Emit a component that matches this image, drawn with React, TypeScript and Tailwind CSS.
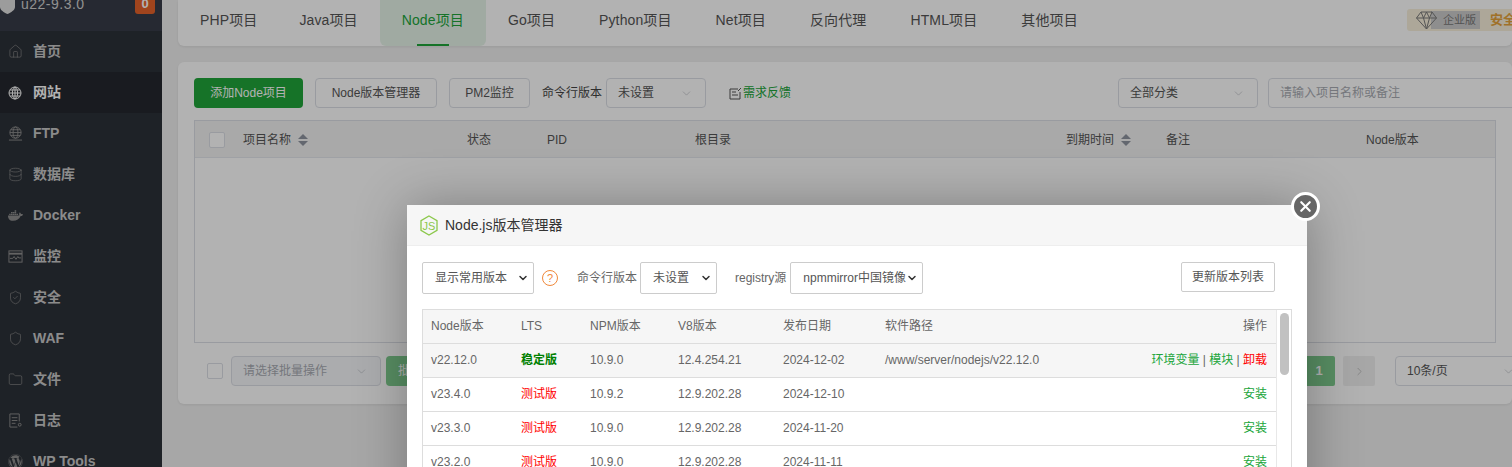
import React from "react";
import { Home, Database, Folder, ShieldCheck, Shield, ChevronDown, ChevronRight, X } from "lucide-react";
import { FaDocker, FaWordpress } from "react-icons/fa";

const FONT = "font-['Liberation_Sans','Noto_Sans_CJK_SC',sans-serif]";

function WebGlobe() {
  return (
    <svg width="14" height="14" viewBox="0 0 14 14" fill="none" stroke="currentColor" strokeWidth="1">
      <circle cx="7" cy="7" r="6" />
      <ellipse cx="7" cy="7" rx="2.600" ry="6" />
      <path d="M1 7h12M2 4h10M2 10h10M7 1v12" />
    </svg>
  );
}
function Ftp() {
  return (
    <svg width="15" height="15" viewBox="0 0 16 16" fill="none" stroke="currentColor" strokeWidth="1">
      <circle cx="8" cy="7" r="6" />
      <ellipse cx="8" cy="7" rx="2.600" ry="6" />
      <path d="M2 7h12M3 4h10M3 10h10M1 15h14" />
    </svg>
  );
}
function Monitor() {
  return (
    <svg width="15" height="15" viewBox="0 0 16 16" fill="none" stroke="currentColor" strokeWidth="1">
      <rect x="1" y="2" width="14" height="12" />
      <path d="M1 5h14" strokeWidth="2" />
      <path d="M2 10h3l1.500-2 2 3 2-3 1 1.500h2.500" />
    </svg>
  );
}
function Log() {
  return (
    <svg width="15" height="15" viewBox="0 0 16 16" fill="none" stroke="currentColor" strokeWidth="1">
      <path d="M12 9V1H2v14h8" />
      <path d="M4 5h6M4 8h6M4 11h4" />
      <circle cx="12.500" cy="12.500" r="1.500" />
    </svg>
  );
}
function Diamond() {
  return (
    <svg width="21" height="19" viewBox="0 0 21 19" fill="none" stroke="#555" strokeWidth="1" className="relative z-10 ml-[9px] shrink-0">
      <path d="M5 1h11l4.500 6L10.500 18 .5 7z" />
      <path d="M.5 7h20M5 1l2.500 6 3 11 3-11L16 1M7.500 7l3-6 3 6" />
    </svg>
  );
}
function Note() {
  return (
    <svg width="13" height="13" viewBox="0 0 13 13" fill="none" stroke="#555" strokeWidth="1" className="mr-[1px]">
      <path d="M9 2H1v10h10V5" />
      <path d="M3 5h4M3 8h6M9 4l3-3" />
    </svg>
  );
}

const menu: { label: string; icon: React.ReactNode; active?: boolean }[] = [
  { label: "首页", icon: <Home size={15} strokeWidth={1} /> },
  { label: "网站", icon: <WebGlobe />, active: true },
  { label: "FTP", icon: <Ftp /> },
  { label: "数据库", icon: <Database size={15} strokeWidth={1} /> },
  { label: "Docker", icon: <FaDocker size={15} /> },
  { label: "监控", icon: <Monitor /> },
  { label: "安全", icon: <ShieldCheck size={15} strokeWidth={1} /> },
  { label: "WAF", icon: <Shield size={15} strokeWidth={1} /> },
  { label: "文件", icon: <Folder size={15} strokeWidth={1} /> },
  { label: "日志", icon: <Log /> },
  { label: "WP Tools", icon: <FaWordpress size={15} /> },
];

const tabs = ["PHP项目", "Java项目", "Node项目", "Go项目", "Python项目", "Net项目", "反向代理", "HTML项目", "其他项目"];

function Sort() {
  return (
    <span className="flex flex-col gap-[2px] ml-[7px]">
      <span className="w-0 h-0 border-x-[5px] border-x-transparent border-b-[5px] border-b-[#8f94a0]" />
      <span className="w-0 h-0 border-x-[5px] border-x-transparent border-t-[5px] border-t-[#8f94a0]" />
    </span>
  );
}

function Pick({ text, className, muted }: { text: string; className: string; muted?: boolean }) {
  return (
    <div className={`h-[30px] flex items-center justify-between pl-[11px] pr-[12px] border border-[#dcdfe6] rounded-[4px] text-[12px] ${muted ? "text-[#a8abb2] bg-[#f5f7fa]" : "text-[#555] bg-white"} ${className}`}>
      <span>{text}</span>
      <ChevronDown size={13} strokeWidth={1} className="text-[#a8abb2]" />
    </div>
  );
}

function NativePick({ text, className }: { text: string; className: string }) {
  return (
    <div className={`h-[32px] flex items-center justify-between pl-[12px] pr-[4px] border border-[#cccccc] rounded-[2px] text-[12px] text-[#555] bg-white shrink-0 ${className}`}>
      <span className="whitespace-nowrap">{text}</span>
      <ChevronDown size={12} strokeWidth={3} className="text-[#333] shrink-0" />
    </div>
  );
}

const rows = [
  { v: "v22.12.0", lts: "稳定版", npm: "10.9.0", v8: "12.4.254.21", date: "2024-12-02", path: "/www/server/nodejs/v22.12.0", on: true },
  { v: "v23.4.0", lts: "测试版", npm: "10.9.2", v8: "12.9.202.28", date: "2024-12-10", path: "" },
  { v: "v23.3.0", lts: "测试版", npm: "10.9.0", v8: "12.9.202.28", date: "2024-11-20", path: "" },
  { v: "v23.2.0", lts: "测试版", npm: "10.9.0", v8: "12.9.202.28", date: "2024-11-11", path: "" },
];

export default function App() {
  return (
    <div className={`relative flex w-[1512px] h-[467px] overflow-hidden bg-[#f0f0f0] ${FONT}`}>
      <aside className="w-[162px] shrink-0 -mt-[23px] bg-[#2c3138] text-[#c8c8c8]">
        <div className="h-[54px] bg-[#373c48] flex items-center relative">
          <svg width="15" height="20" viewBox="0 0 15 20" className="mt-[2px] text-[#e0e0e0]" fill="currentColor">
            <path d="M0 4l3-2 1.500 1.500L7.500 2l3 1.500L12 2l3 2v8c0 3-4 5.500-7.500 7C4 17.500 0 15 0 12z" />
          </svg>
          <span className="ml-[6px] text-[14px] text-[#d0d0d0] tracking-[0.5px]">u22-9.3.0</span>
          <span className="absolute left-[135px] top-[16px] w-[20px] h-[21px] rounded-[3px] bg-[#e5622a] text-white text-[13px] font-bold flex items-center justify-center">0</span>
        </div>
        <nav>
          {menu.map((m) => (
            <div key={m.label} className={`h-[41px] flex items-center pl-[8px] text-[14px] font-bold ${m.active ? "bg-[#25282e] text-white" : ""}`}>
              <span className={`w-[25px] flex ${m.active ? "text-white" : "text-[#8f8f8f]"}`}>{m.icon}</span>
              <span>{m.label}</span>
            </div>
          ))}
        </nav>
      </aside>

      <main className="flex-1 min-w-0 pl-[16px] flex flex-col">
        <div className="h-[46px] bg-white rounded-b-[6px] flex items-stretch text-[14px] text-[#555] shrink-0 shadow-[0_1px_3px_rgba(0,0,0,0.08)]">
          {tabs.map((t, i) => (
            <div key={t} className={`relative flex items-center px-[22px] pb-[6px] whitespace-nowrap tracking-[0.12px] ${i === 0 ? "-mr-[2px]" : ""} ${i === 2 ? "bg-[#e6f4e9] text-[#20a53a] rounded-b-[6px]" : ""}`}>
              {t}
              {i === 2 && <span className="absolute left-[37px] bottom-0 w-[32px] h-[2px] bg-[#20a53a]" />}
            </div>
          ))}
          <div className="ml-auto relative w-[105px] shrink-0 flex items-center">
            <div className="h-[22px] mt-[-6px] w-full bg-[#f8f0dc] rounded-l-[3px] flex items-center">
              <Diamond />
              <span className="-ml-[6px] w-[49px] shrink-0 h-[18px] bg-[#cccccc] text-[#777] text-[11px] flex items-center justify-end pr-[4px] whitespace-nowrap">企业版</span>
              <span className="ml-[10px] text-[13px] font-bold text-[#e5a33c] whitespace-nowrap">安全</span>
            </div>
          </div>
        </div>

        <section className="mt-[16px] h-[342px] bg-white rounded-[6px] pt-[16px] px-[16px] shrink-0 shadow-[0_1px_3px_rgba(0,0,0,0.08)]">
          <div className="flex items-center h-[30px] text-[12px]">
            <button className="h-[30px] w-[109px] rounded-[4px] bg-[#20a53a] text-white">添加Node项目</button>
            <button className="ml-[12px] h-[30px] w-[122px] rounded-[4px] border border-[#dcdfe6] text-[#555]">Node版本管理器</button>
            <button className="ml-[12px] h-[30px] w-[81px] rounded-[4px] border border-[#dcdfe6] text-[#555]">PM2监控</button>
            <span className="ml-[12px] text-[#444] w-[64px] whitespace-nowrap">命令行版本</span>
            <Pick text="未设置" className="w-[100px]" />
            <span className="ml-[23px] flex items-center text-[#20a53a]">
              <Note />
              需求反馈
            </span>
            <Pick text="全部分类" className="ml-auto w-[140px] text-[#333]" />
            <div className="ml-[10px] w-[260px] h-[30px] shrink-0 -mr-[32px] flex items-center pl-[11px] border border-[#dcdfe6] rounded-l-[4px] text-[#a8abb2]">请输入项目名称或备注</div>
          </div>

          <div className="mt-[12px] h-[223px] border border-[#dcdfe6]">
            <div className="h-[37px] pt-[2px] bg-[#f2f2f2] border-b border-[#e4e7ed] flex items-center text-[12px] text-[#555]">
              <span className="ml-[14px] w-[16px] h-[16px] bg-white border border-[#dcdfe6] rounded-[2px]" />
              <span className="ml-[18px] flex items-center w-[224px]">项目名称<Sort /></span>
              <span className="w-[80px]">状态</span>
              <span className="w-[148px]">PID</span>
              <span className="w-[371px]">根目录</span>
              <span className="flex items-center w-[100px]">到期时间<Sort /></span>
              <span className="w-[200px]">备注</span>
              <span className="whitespace-nowrap">Node版本</span>
            </div>
          </div>

          <div className="mt-[13px] flex items-center h-[30px] text-[12px]">
            <span className="ml-[13px] w-[16px] h-[16px] border border-[#dcdfe6] rounded-[2px]" />
            <Pick text="请选择批量操作" muted className="ml-[8px] w-[150px]" />
            <button className="ml-[5px] h-[30px] w-[60px] rounded-[4px] bg-[#7fcc8e] text-white text-left pl-[12px]">批量</button>
            <div className="ml-auto flex items-center">
              <span className="w-[32px] h-[30px] rounded-[2px] bg-[#7fcc8e] text-white font-bold text-[13px] flex items-center justify-center">1</span>
              <span className="ml-[8px] w-[32px] h-[30px] rounded-[2px] bg-[#f0f0f0] text-[#999] flex items-center justify-center">
                <ChevronRight size={13} strokeWidth={1} />
              </span>
              <Pick text="10条/页" className="ml-[20px] w-[133px] -mr-[32px] shrink-0" />
            </div>
          </div>
        </section>
      </main>

      <div className="absolute inset-0 bg-black/30" />

      <div className="absolute left-[407px] top-[205px] w-[900px] h-[400px] bg-white shadow-[1px_1px_50px_rgba(0,0,0,0.3)] text-[12px] text-[#666]">
        <div className="h-[41px] bg-[#f6f6f6] border-b border-[#eeeeee] flex items-center pl-[13px] text-[14px] text-[#333]">
          <svg width="18" height="21" viewBox="0 0 18 21" fill="none">
            <path d="M9 1l8 4.700v9.600L9 20l-8-4.700V5.700z" stroke="#8cc84b" strokeWidth="1.300" />
            <text x="9" y="14.500" textAnchor="middle" fontSize="11" fill="#8cc84b" fontFamily="Liberation Sans">JS</text>
          </svg>
          <span className="ml-[7px]">Node.js版本管理器</span>
        </div>

        <div className="pl-[15px] pr-[32px] mt-[16px] flex items-center h-[32px]">
          <NativePick text="显示常用版本" className="w-[112px]" />
          <span className="ml-[8px] w-[16px] h-[16px] rounded-full border border-[#f0883a] text-[#f0883a] text-[11px] flex items-center justify-center">?</span>
          <span className="ml-[19px] whitespace-nowrap">命令行版本</span>
          <NativePick text="未设置" className="ml-[3px] w-[77px]" />
          <span className="ml-[18px] whitespace-nowrap">registry源</span>
          <NativePick text="npmmirror中国镜像" className="ml-[4px] w-[133px]" />
          <button className="ml-auto w-[94px] h-[30px] -mt-[2px] border border-[#cccccc] rounded-[2px] text-[#555]">更新版本列表</button>
        </div>

        <div className="relative ml-[15px] mt-[15px] w-[870px] border border-[#dddddd] pr-[15px]">
          <table className="w-full table-fixed border-collapse">
            <colgroup>
              <col className="w-[98px]" />
              <col className="w-[69px]" />
              <col className="w-[88px]" />
              <col className="w-[105px]" />
              <col className="w-[102px]" />
              <col className="w-[200px]" />
              <col />
            </colgroup>
            <thead>
              <tr className="h-[33px] bg-[#f6f6f6] border-b border-[#dddddd]">
                {["Node版本", "LTS", "NPM版本", "V8版本", "发布日期", "软件路径"].map((h, i) => (
                  <th key={h} className={`font-normal text-left ${i === 0 ? "pl-[8px]" : ""}`}>{h}</th>
                ))}
                <th className="font-normal text-right pr-[9px]">操作</th>
              </tr>
            </thead>
            <tbody>
              {rows.map((r) => (
                <tr key={r.v} className={`h-[34px] border-b border-[#dddddd] ${r.on ? "bg-[#f6f6f6]" : ""}`}>
                  <td className="pl-[8px]">{r.v}</td>
                  <td className={r.on ? "text-[#008000] font-bold" : "text-[#ff0000]"}>{r.lts}</td>
                  <td>{r.npm}</td>
                  <td>{r.v8}</td>
                  <td>{r.date}</td>
                  <td className="whitespace-nowrap">{r.path}</td>
                  <td className="text-right pr-[9px] whitespace-nowrap text-[#20a53a]">
                    {r.on ? (
                      <>
                        环境变量 <span className="text-[#666]">|</span> 模块 <span className="text-[#666]">|</span> <span className="text-[#ff0000]">卸载</span>
                      </>
                    ) : (
                      "安装"
                    )}
                  </td>
                </tr>
              ))}
            </tbody>
          </table>
          <div className="absolute top-0 right-0 bottom-0 w-[15px] border-l border-[#e8e8e8] bg-white">
            <div className="mt-[3px] ml-[3px] w-[9px] h-[62px] rounded-full bg-[#c1c1c1]" />
          </div>
        </div>
      </div>

      <div className="absolute left-[1291px] top-[192px] w-[29px] h-[29px] rounded-full bg-[#666] border-[3px] border-white flex items-center justify-center">
        <X size={17} strokeWidth={3} className="text-white" />
      </div>
    </div>
  );
}
